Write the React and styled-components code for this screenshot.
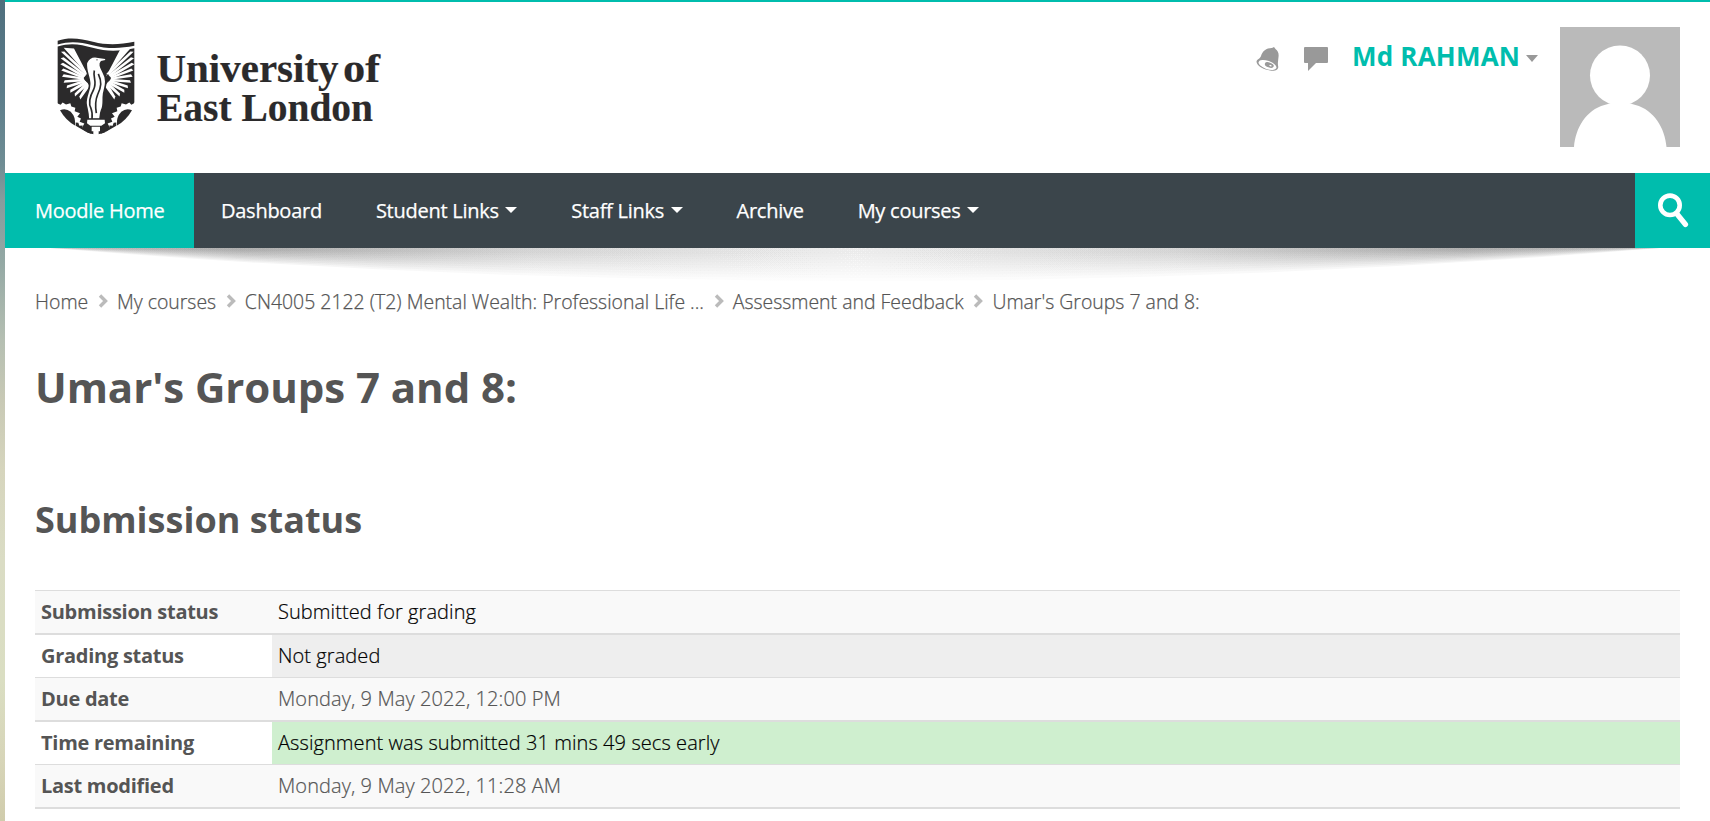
import React from "react";
import styled, { createGlobalStyle } from "styled-components";

const teal = "#00bdad";

const GlobalStyle = createGlobalStyle`
  * { box-sizing: border-box; }
  html, body { margin: 0; height: 821px; overflow: hidden; }
  body {
    font-family: "Open Sans", "Noto Sans", sans-serif;
    color: #555;
    background: linear-gradient(#4f6f7d 0, #5b7c8a 90px, #6f8d94 165px, #879c9d 200px, #93a8a4 260px, #b5bfb2 340px, #c8c9b5 400px, #d6d5bd 470px, #dadcc4 560px, #dadec2 680px, #d7d5b8 760px, #d0ccac 821px);
  }
`;

const Page = styled.div`
  margin-left: 5px;
  height: 821px;
  overflow: hidden;
  background: #fff;
  border-top: 2px solid ${teal};
`;

const Header = styled.header`
  display: flex;
  justify-content: space-between;
  align-items: flex-start;
  height: 171px;
  padding: 23px 30px 0 35px;
`;

const UserArea = styled.div`
  display: flex;
  align-items: flex-start;
`;

const IconButton = styled.span`
  display: flex;
  width: 24px;
  height: 24px;
  margin: 22px 24px 0 0;
`;

const UserName = styled.a`
  display: flex;
  align-items: center;
  gap: 6px;
  width: 186px;
  height: 36px;
  margin: 13px 22px 0 0;
  color: ${teal};
  font-size: 26px;
  font-weight: 700;
  letter-spacing: 0.2px;
  white-space: nowrap;
`;

const Avatar = styled.svg`
  width: 120px;
  height: 120px;
  margin-top: 2px;
  background: #bababa;
`;

const Caret = styled.span`
  margin-top: ${(p) => p.$drop || 0}px;
  border: 6px solid transparent;
  border-top: ${(p) => p.$depth || 6}px solid ${(p) => p.$color};
  border-bottom: 0;
`;

const NavBar = styled.nav`
  position: relative;
  display: flex;
  height: 75px;
  background: #3b454b;
`;

const NavItem = styled.a`
  display: flex;
  align-items: center;
  gap: 6.5px;
  padding: 0 ${(p) => (p.$active ? 30 : 27)}px;
  background: ${(p) => (p.$active ? teal : "transparent")};
  color: #fff;
  font-size: 20px;
  letter-spacing: -0.26px;
  -webkit-text-stroke: 0.25px #fff;
  white-space: nowrap;

  &:first-child {
    width: 189px;
  }
`;

const SearchButton = styled.div`
  width: 75px;
  height: 75px;
  margin-left: auto;
  background: ${teal};
`;

const NavShadow = styled.svg`
  position: absolute;
  top: 75px;
  left: 0;
  width: 1705px;
  height: 50px;
  pointer-events: none;
`;

const Content = styled.main`
  padding: 0 30px;
`;

const Breadcrumb = styled.ol`
  display: flex;
  align-items: center;
  list-style: none;
  height: 28px;
  margin: 39px 0 0;
  padding: 0;
  font-size: 19.44px;
  font-weight: 300;
  -webkit-text-stroke: 0.25px #555;
`;

const Crumb = styled.li`
  display: flex;
  align-items: center;
  white-space: nowrap;
`;

const Chevron = styled.svg`
  width: 10px;
  height: 14px;
  margin: 0 9px 0 9.7px;
`;

const Title = styled.h1`
  margin: 42px 0 0;
  height: 60px;
  line-height: 60px;
  font-size: 42px;
  font-weight: 700;
  letter-spacing: -0.06px;
`;

const SectionTitle = styled.h2`
  margin: 75px 0 0;
  height: 56px;
  line-height: 56px;
  font-size: 36px;
  font-weight: 700;
`;

const StatusTable = styled.dl`
  margin: 42px 0 0;
  border-bottom: 2px solid #ddd;
`;

const Row = styled.div`
  display: flex;
  height: ${(p) => (p.$odd ? 43 : 44)}px;
  border-top: ${(p) => (p.$odd ? 1 : 2)}px solid #ddd;
  background: ${(p) => (p.$odd ? "#f9f9f9" : "#fff")};
  font-size: 20px;
  line-height: 42px;
`;

const Label = styled.dt`
  width: 237px;
  padding-left: 6px;
  font-weight: 700;
  letter-spacing: -0.27px;
`;

const Value = styled.dd`
  flex: 1;
  margin: 0;
  padding-left: 6px;
  color: ${(p) => (p.$dark ? "#000" : "#555")};
  background: ${(p) => p.$bg || "transparent"};
  font-weight: 300;
  letter-spacing: 0.08px;
  -webkit-text-stroke: 0.2px ${(p) => (p.$dark ? "#000" : "#555")};
`;

const ink = "#2b2a2b";

const feathers = [
  "M71 67L102 69L137 136L147 153Z",
  "M63 79L73 78L145 145L136 148Z",
  "M62 98L71 95L139 148L134 153Z",
  "M61 116L69 112L136 151L131 157Z",
  "M64 135L70 129L132 154L130 160Z",
  "M66 154L71 146L131 157L132 163Z",
  "M71 172L74 164L132 160L134 167Z",
  "M80 188L81 180L134 163L137 170Z",
  "M91 202L91 193L137 166L141 174Z",
  "M105 213L104 204L140 169L145 178Z",
  "M121 222L118 213L142 172L149 183Z",
];

function Crest() {
  return (
    <g>
      <path fill={ink} d="M53 46C92 33 124 41 159 49C202 60 239 58 283 49V61C238 70 202 70 158 59C121 50 93 45 53 57Z" />
      <path fill={ink} d="M53 63C93 51 122 57 158 67C202 79 239 77 283 68V237C278 263 226 309 184 324L168 328L151 324C108 308 60 270 53 237Z" />
      <path fill="#fff" d="M40 220L53 234L62 238L68 231L78 237L91 233L94 243L106 247L104 257L120 263L112 274L123 279L119 289L133 294L125 309L151 327V340H40Z" />
      <path fill="#fff" d="M294 220L281 234L274 238L268 231L258 237L245 233L242 243L230 247L232 257L216 263L224 274L213 279L217 289L203 294L211 309L185 327V340H294Z" />
      <path fill={ink} d="M60 254Q78 246 92 259Q108 275 105 300Q77 284 60 254Z" />
      <path fill={ink} d="M276 254Q258 246 244 259Q228 275 231 300Q259 284 276 254Z" />
      <path fill={ink} d="M107 291L115 292L118 301L128 300L127 308L136 309L139 318L154 313V325L142 321L107 301Z" />
      <path fill={ink} d="M229 291L221 292L218 301L208 300L209 308L200 309L197 318L182 313V325L194 321L229 301Z" />
      <g fill="#fff">
        {feathers.map((d) => <path key={d} d={d} />)}
        <g transform="matrix(-1 0 0 1 344 0)">
          {feathers.map((d) => <path key={d} d={d} />)}
        </g>
      </g>
      <path fill="#fff" stroke={ink} strokeWidth="5" d="M139 112C146 96 158 91 175 95L196 98L200 105L184 109C178 115 181 123 188 137C204 165 196 181 191 204C188 224 193 238 185 254C181 264 181 271 180 282H145C145 261 140 250 138 235C136 211 150 195 149 175C149 156 136 135 139 112Z" />
      <path fill="none" stroke={ink} strokeWidth="5" d="M163 135C158 155 172 169 161 192C150 212 144 232 153 249C158 261 157 270 156 281M175 145C186 169 184 184 173 207C164 228 166 245 169 263" />
      <circle cx="171" cy="103" r="2" fill={ink} />
      <path fill={ink} d="M144 278H189V284H198V295L188 304H147L138 295V284H144Z" />
      <path fill="#fff" d="M142 283H194L195 293L184 301H151L141 293ZM155 304H180V317H155ZM160 317H176V330H160Z" />
    </g>
  );
}

function Logo() {
  return (
    <svg width="360" height="120" viewBox="40 25 360 120" aria-label="University of East London">
      <g transform="translate(40 25.5) scale(.33333)"><Crest /></g>
      <g fill={ink} stroke={ink} strokeWidth=".2" fontFamily='"Liberation Serif", serif' fontWeight="700" fontSize="39">
        <text x="156.5" y="82" textLength="182" lengthAdjust="spacingAndGlyphs">University</text>
        <text x="343" y="82" textLength="37" lengthAdjust="spacingAndGlyphs">of</text>
        <text x="157" y="120.500" textLength="216" lengthAdjust="spacingAndGlyphs">East London</text>
      </g>
    </svg>
  );
}

const lenses = [12, 18, 24, 30, 36, 42, 48, 54, 60, 66];

const navItems = [
  { text: "Moodle Home", active: true },
  { text: "Dashboard" },
  { text: "Student Links", menu: true },
  { text: "Staff Links", menu: true },
  { text: "Archive" },
  { text: "My courses", menu: true },
];

const crumbs = [
  "Home",
  "My courses",
  "CN4005 2122 (T2) Mental Wealth: Professional Life ...",
  "Assessment and Feedback",
  "Umar's Groups 7 and 8:",
];

const rows = [
  { label: "Submission status", value: "Submitted for grading", dark: true },
  { label: "Grading status", value: "Not graded", dark: true, bg: "#eee" },
  { label: "Due date", value: "Monday, 9 May 2022, 12:00 PM" },
  { label: "Time remaining", value: "Assignment was submitted 31 mins 49 secs early", dark: true, bg: "#cfefcf" },
  { label: "Last modified", value: "Monday, 9 May 2022, 11:28 AM" },
];

export default function App() {
  return (
    <>
      <GlobalStyle />
      <Page>
        <Header>
          <Logo />
          <UserArea>
            <IconButton>
              <svg width="24" height="24" viewBox="0 0 24 24">
                <path fill="#999" d="M16 1L18 0L19.500 2C22 4 23 6 22.500 10C22 15 21.500 17 22.300 20C22.200 23 18 25 12 23C6 22 .5 18 .5 14.500C1 12 4 12 5 9C6.500 4 10 1 16 1Z" />
                <ellipse cx="11.500" cy="18" rx="9.400" ry="4.100" transform="rotate(19 11.500 18)" fill="#fff" />
                <ellipse cx="13.300" cy="18" rx="4.600" ry="2.500" transform="rotate(19 13.300 18)" fill="#999" />
                <ellipse cx="14.500" cy="18.700" rx="1.300" ry=".7" transform="rotate(19 14.500 18.700)" fill="#fff" />
              </svg>
            </IconButton>
            <IconButton>
              <svg width="24" height="24" viewBox="0 0 24 24">
                <path fill="#999" d="M1 0H23Q24 0 24 1V15Q24 16 23 16H12L4 24V16H1Q0 16 0 15V1Q0 0 1 0Z" />
              </svg>
            </IconButton>
            <UserName>
              Md RAHMAN
              <Caret $color="#999" $depth={7} $drop={5} />
            </UserName>
            <Avatar viewBox="0 0 120 120">
              <circle cx="60" cy="48.500" r="30" fill="#fff" />
              <path fill="#fff" d="M14 120C15.500 101 26 83 44.500 78Q60 72 75.500 78C94 83 105 101 106.500 120Z" />
            </Avatar>
          </UserArea>
        </Header>
        <NavBar>
          {navItems.map((n) => (
            <NavItem key={n.text} $active={n.active}>
              {n.text}
              {n.menu && <Caret $color="#fff" $drop={-1} />}
            </NavItem>
          ))}
          <SearchButton>
            <svg width="75" height="75" viewBox="0 0 75 75" fill="none" stroke="#fff">
              <circle cx="35" cy="32.300" r="9.700" strokeWidth="4.600" />
              <path d="M42 41L50.500 51.500" strokeWidth="5.200" strokeLinecap="round" />
            </svg>
          </SearchButton>
          <NavShadow viewBox="0 0 1705 50">
            <defs>
              <linearGradient id="navShade" gradientUnits="userSpaceOnUse" x1="45" y1="0" x2="1655" y2="0">
                <stop offset="0" stopColor="#444" stopOpacity=".04" />
                <stop offset=".12" stopColor="#444" stopOpacity=".055" />
                <stop offset=".3" stopColor="#444" stopOpacity=".025" />
                <stop offset=".5" stopColor="#444" stopOpacity=".01" />
                <stop offset=".7" stopColor="#444" stopOpacity=".025" />
                <stop offset=".88" stopColor="#444" stopOpacity=".055" />
                <stop offset="1" stopColor="#444" stopOpacity=".04" />
              </linearGradient>
            </defs>
            {lenses.map((d) => (
              <path key={d} d={`M45 0Q850 ${d} 1655 0Z`} fill="url(#navShade)" />
            ))}
          </NavShadow>
        </NavBar>
        <Content>
          <Breadcrumb>
            {crumbs.map((c, i) => (
              <Crumb key={c}>
                {i > 0 && (
                  <Chevron viewBox="0 0 10 14">
                    <path d="M2 1.500L7.500 7L2 12.500" fill="none" stroke="#bbb" strokeWidth="3.400" />
                  </Chevron>
                )}
                {c}
              </Crumb>
            ))}
          </Breadcrumb>
          <Title>Umar's Groups 7 and 8:</Title>
          <SectionTitle>Submission status</SectionTitle>
          <StatusTable>
            {rows.map((r, i) => (
              <Row key={r.label} $odd={i % 2 === 0}>
                <Label>{r.label}</Label>
                <Value $dark={r.dark} $bg={r.bg}>{r.value}</Value>
              </Row>
            ))}
          </StatusTable>
        </Content>
      </Page>
    </>
  );
}
